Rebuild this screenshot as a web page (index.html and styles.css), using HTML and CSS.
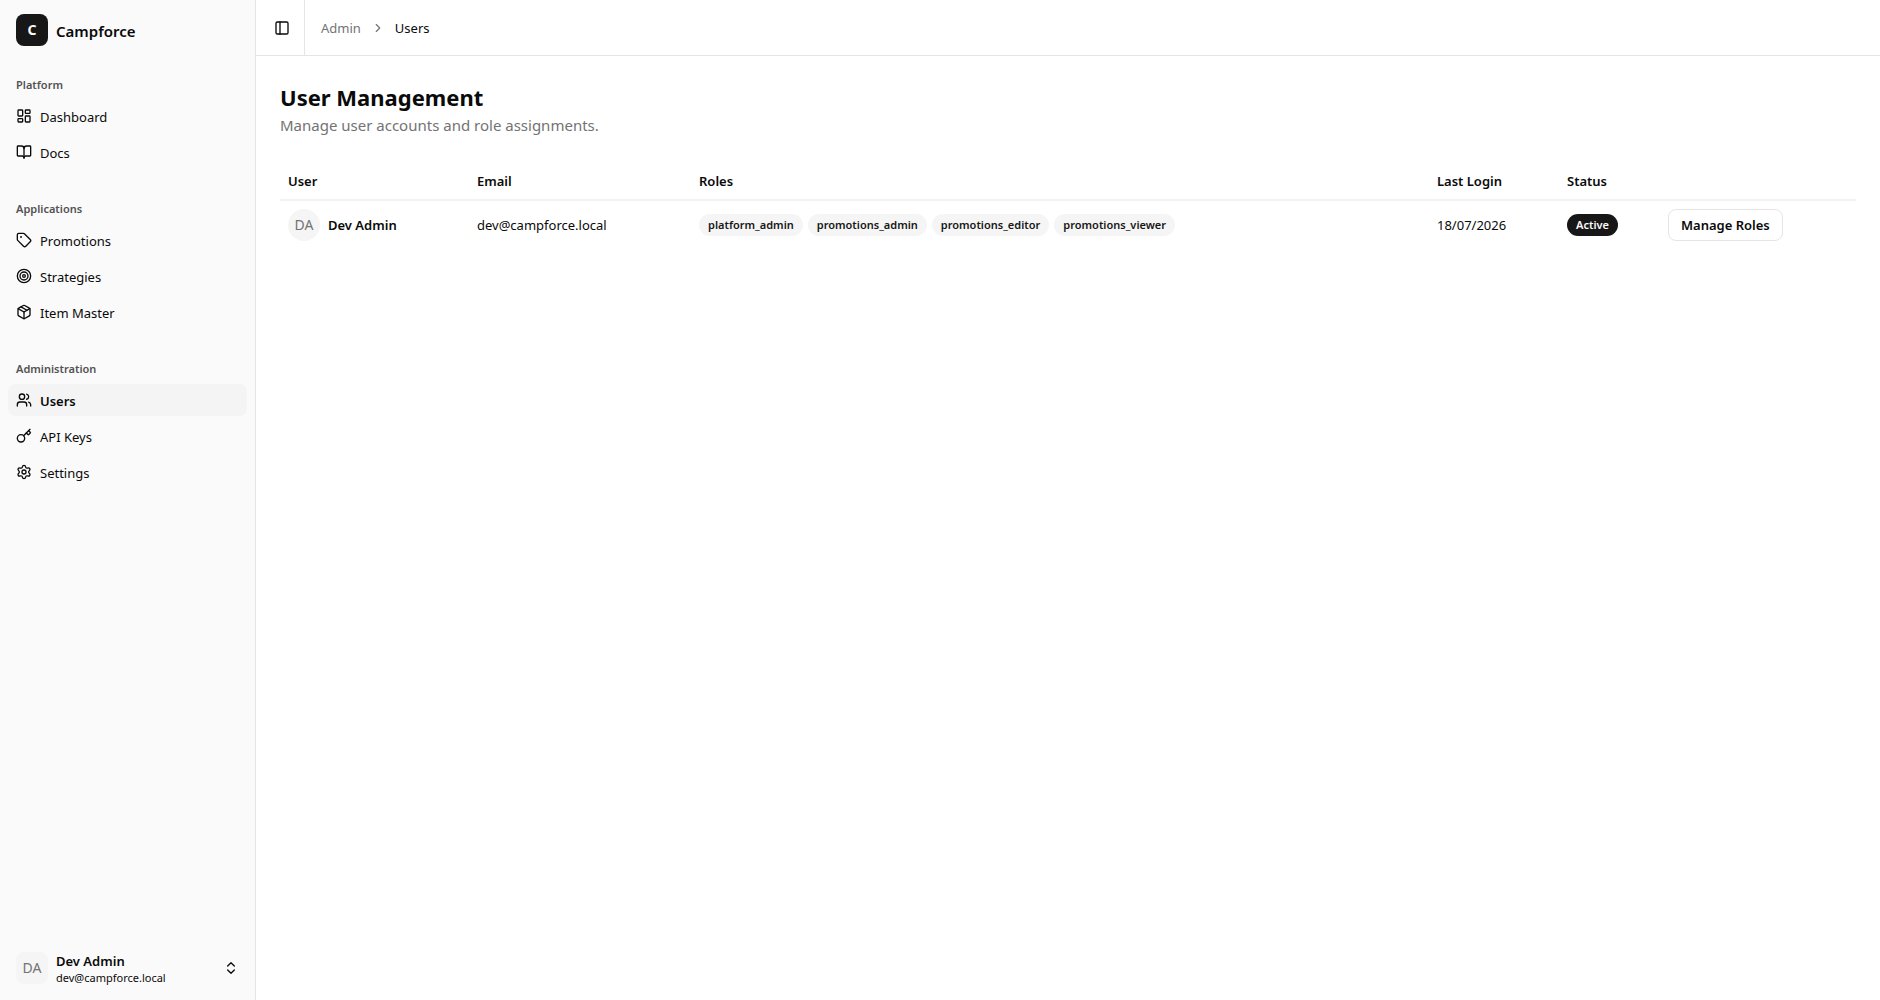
FILE: index.html
```
<!DOCTYPE html>
<html lang="en">
<head>
    <meta charset="utf-8">
    <meta name="viewport" content="width=device-width,initial-scale=1">
    <title>Users - Campforce</title>
    <link rel="stylesheet" href="styles.css">
</head>
<body>
<div class="layout">
    <aside class="sidebar">
        <a class="brand" href="#">
            <span class="logo">C</span>
            <span class="brand-name">Campforce</span>
        </a>
        <nav class="nav">
            <section class="group">
                <h2 class="group-label">Platform</h2>
                <a class="nav-item" href="#">
                    <svg class="icon" viewBox="0 0 24 24"><rect width="7" height="9" x="3" y="3" rx="1"/><rect width="7" height="5" x="14" y="3" rx="1"/><rect width="7" height="9" x="14" y="12" rx="1"/><rect width="7" height="5" x="3" y="16" rx="1"/></svg>
                    <span>Dashboard</span>
                </a>
                <a class="nav-item" href="#">
                    <svg class="icon" viewBox="0 0 24 24"><path d="M12 7v14"/><path d="M3 18a1 1 0 0 1-1-1V4a1 1 0 0 1 1-1h5a4 4 0 0 1 4 4 4 4 0 0 1 4-4h5a1 1 0 0 1 1 1v13a1 1 0 0 1-1 1h-6a3 3 0 0 0-3 3 3 3 0 0 0-3-3z"/></svg>
                    <span>Docs</span>
                </a>
            </section>
            <section class="group">
                <h2 class="group-label">Applications</h2>
                <a class="nav-item" href="#">
                    <svg class="icon" viewBox="0 0 24 24"><path d="M12.586 2.586A2 2 0 0 0 11.172 2H4a2 2 0 0 0-2 2v7.172a2 2 0 0 0 .586 1.414l8.704 8.704a2.426 2.426 0 0 0 3.42 0l6.58-6.58a2.426 2.426 0 0 0 0-3.42z"/><circle cx="7.5" cy="7.5" r=".5" fill="currentColor"/></svg>
                    <span>Promotions</span>
                </a>
                <a class="nav-item" href="#">
                    <svg class="icon" viewBox="0 0 24 24"><circle cx="12" cy="12" r="10"/><circle cx="12" cy="12" r="6"/><circle cx="12" cy="12" r="2"/></svg>
                    <span>Strategies</span>
                </a>
                <a class="nav-item" href="#">
                    <svg class="icon" viewBox="0 0 24 24"><path d="M11 21.73a2 2 0 0 0 2 0l7-4A2 2 0 0 0 21 16V8a2 2 0 0 0-1-1.73l-7-4a2 2 0 0 0-2 0l-7 4A2 2 0 0 0 3 8v8a2 2 0 0 0 1 1.73z"/><path d="M12 22V12"/><path d="M3.29 7 12 12l8.71-5"/><path d="m7.5 4.27 9 5.15"/></svg>
                    <span>Item Master</span>
                </a>
            </section>
            <section class="group">
                <h2 class="group-label">Administration</h2>
                <a class="nav-item active" href="#">
                    <svg class="icon" viewBox="0 0 24 24"><path d="M16 21v-2a4 4 0 0 0-4-4H6a4 4 0 0 0-4 4v2"/><circle cx="9" cy="7" r="4"/><path d="M22 21v-2a4 4 0 0 0-3-3.87"/><path d="M16 3.13a4 4 0 0 1 0 7.75"/></svg>
                    <span>Users</span>
                </a>
                <a class="nav-item" href="#">
                    <svg class="icon" viewBox="0 0 24 24"><path d="m15.5 7.5 2.3 2.3a1 1 0 0 0 1.4 0l2.1-2.1a1 1 0 0 0 0-1.4L19 4"/><path d="m21 2-9.6 9.6"/><circle cx="7.5" cy="15.5" r="5.5"/></svg>
                    <span>API Keys</span>
                </a>
                <a class="nav-item" href="#">
                    <svg class="icon" viewBox="0 0 24 24"><path d="M9.671 4.136a2.34 2.34 0 0 1 4.659 0 2.34 2.34 0 0 0 3.319 1.915 2.34 2.34 0 0 1 2.33 4.033 2.34 2.34 0 0 0 0 3.831 2.34 2.34 0 0 1-2.33 4.033 2.34 2.34 0 0 0-3.319 1.915 2.34 2.34 0 0 1-4.659 0 2.34 2.34 0 0 0-3.32-1.915 2.34 2.34 0 0 1-2.33-4.033 2.34 2.34 0 0 0 0-3.831A2.34 2.34 0 0 1 6.35 6.051a2.34 2.34 0 0 0 3.319-1.915"/><circle cx="12" cy="12" r="3"/></svg>
                    <span>Settings</span>
                </a>
            </section>
        </nav>
        <button class="account" type="button">
            <span class="avatar square">DA</span>
            <span class="account-text">
                <span class="account-name">Dev Admin</span>
                <span class="account-email">dev@campforce.local</span>
            </span>
            <svg class="icon" viewBox="0 0 24 24"><path d="m7 15 5 5 5-5"/><path d="m7 9 5-5 5 5"/></svg>
        </button>
    </aside>

    <div class="content">
        <header class="topbar">
            <button class="toggle" type="button" aria-label="Toggle sidebar">
                <svg class="icon" viewBox="0 0 24 24"><rect width="18" height="18" x="3" y="3" rx="2"/><path d="M9 3v18"/></svg>
            </button>
            <nav class="breadcrumb" aria-label="Breadcrumb">
                <a href="#">Admin</a>
                <svg class="icon small" viewBox="0 0 24 24"><path d="m9 18 6-6-6-6"/></svg>
                <span class="current">Users</span>
            </nav>
        </header>

        <main class="page">
            <div>
                <h1>User Management</h1>
                <p class="subtitle">Manage user accounts and role assignments.</p>
            </div>
            <table class="users">
                <colgroup>
                    <col class="col-user">
                    <col class="col-email">
                    <col>
                    <col class="col-login">
                    <col class="col-status">
                    <col class="col-actions">
                </colgroup>
                <thead>
                    <tr>
                        <th>User</th>
                        <th>Email</th>
                        <th>Roles</th>
                        <th>Last Login</th>
                        <th>Status</th>
                        <th></th>
                    </tr>
                </thead>
                <tbody>
                    <tr>
                        <td>
                            <div class="user">
                                <span class="avatar">DA</span>
                                <span>Dev Admin</span>
                            </div>
                        </td>
                        <td>dev@campforce.local</td>
                        <td>
                            <div class="roles">
                                <span class="badge">platform_admin</span>
                                <span class="badge">promotions_admin</span>
                                <span class="badge">promotions_editor</span>
                                <span class="badge">promotions_viewer</span>
                            </div>
                        </td>
                        <td>18/07/2026</td>
                        <td><div class="roles"><span class="badge dark">Active</span></div></td>
                        <td><button class="manage" type="button">Manage Roles</button></td>
                    </tr>
                </tbody>
            </table>
        </main>
    </div>
</div>
</body>
</html>
```
FILE: styles.css
```
*{box-sizing:border-box;}
body{margin:0;background:#fff;color:#0a0a0a;font-family:"Noto Sans","Open Sans",sans-serif;font-size:13px;line-height:20px;}
a{color:inherit;text-decoration:none;}
button{font:inherit;color:inherit;cursor:pointer;}
h1,h2,p{margin:0;}
.layout{display:flex;min-height:100vh;}
.icon{width:16px;height:16px;flex:none;fill:none;stroke:currentColor;stroke-width:2;stroke-linecap:round;stroke-linejoin:round;}
.icon.small{width:14px;height:14px;}

/* sidebar */
.sidebar{display:flex;flex-direction:column;flex:none;width:256px;background:#fafafa;border-right:1px solid #e5e5e5;}
.brand{display:flex;align-items:center;gap:8px;height:60px;padding:0 16px;}
.logo{display:flex;align-items:center;justify-content:center;width:32px;height:32px;border-radius:8px;background:#171717;color:#fafafa;font-size:14px;font-weight:700;}
.brand-name{padding-top:2px;font-size:15px;font-weight:600;}
.nav{display:flex;flex-direction:column;flex:1;gap:8px;}
.group{display:flex;flex-direction:column;padding:8px;}
.group-label{height:32px;padding:0 8px;font-size:11px;font-weight:600;line-height:34px;color:#525252;}
.nav-item{display:flex;align-items:center;gap:8px;height:32px;padding:0 8px;border-radius:8px;}
.nav-item span{padding-top:2px;}
.nav-item + .nav-item{margin-top:4px;}
.nav-item:hover,.nav-item.active{background:#f4f4f4;}
.nav-item.active{font-weight:600;}
.account{display:flex;align-items:center;gap:8px;height:48px;margin:8px;padding:0 8px;border:0;border-radius:8px;background:none;text-align:left;}
.account-text{display:flex;flex-direction:column;flex:1;padding-top:2px;}
.account-name{font-weight:600;line-height:18px;}
.account-email{font-size:11px;line-height:16px;}
.avatar{display:flex;align-items:center;justify-content:center;flex:none;width:32px;height:32px;border-radius:50%;background:#f5f5f5;color:#737373;font-size:14px;font-weight:400;}
.avatar.square{border-radius:8px;}

/* main area */
.content{flex:1;min-width:0;}
.topbar{display:flex;align-items:stretch;height:56px;border-bottom:1px solid #e5e5e5;}
.toggle{display:flex;align-items:center;justify-content:center;width:49px;padding:0 0 0 4px;border:0;border-right:1px solid #e5e5e5;background:none;}
.breadcrumb{display:flex;align-items:center;gap:10px;padding:0 16px;}
.breadcrumb,.breadcrumb a{color:#737373;}
.breadcrumb .current{color:#0a0a0a;}
.page{display:flex;flex-direction:column;gap:24px;padding:25px 24px 24px;}
h1{font-size:22px;font-weight:700;line-height:32px;}
.subtitle{font-size:15px;line-height:24px;color:#737373;}

/* users table */
.users{width:100%;table-layout:fixed;border-collapse:collapse;text-align:left;}
.users th,.users td{padding:8px;vertical-align:middle;}
.users th{height:39px;padding:2px 8px 0;font-weight:600;}
.users thead tr{border-bottom:2px solid #f2f2f2;}
.col-user{width:189px;}
.col-email{width:222px;}
.col-login{width:130px;}
.col-status{width:101px;}
.col-actions{width:196px;}
.user{display:flex;align-items:center;gap:8px;font-weight:600;}
.roles{display:flex;flex-wrap:wrap;gap:5px;}
.badge{padding:3px 9px;border-radius:11px;background:#f5f5f5;color:#171717;font-size:11px;font-weight:600;line-height:16px;}
.badge.dark{background:#171717;color:#fafafa;}
.manage{display:block;height:32px;padding:0 12px;border:1px solid #e5e5e5;border-radius:8px;background:#fff;font-weight:600;}
.manage:hover{background:#f5f5f5;}
```
